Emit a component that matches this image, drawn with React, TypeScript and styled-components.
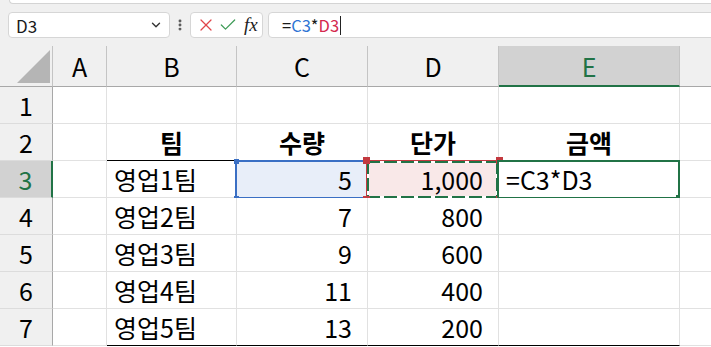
import React from 'react';
import styled, {createGlobalStyle, css} from 'styled-components';
import {ChevronDown, EllipsisVertical, X, Check} from 'lucide-react';

const GlobalStyle = createGlobalStyle`
html,body{
margin:0;
padding:0;
background:#ffffff;
overflow:hidden;
}
*{
box-sizing:border-box;
}
`

const GREEN = '#217346';
const BLUE = '#3a6fc4';
const RED = '#c3393f';
const FONT = `"Noto Sans CJK KR", "Noto Sans", sans-serif`;

type Align = 'left' | 'right' | 'center';
type Mark = 'ref-blue' | 'ref-red' | 'active';
interface CellData {
    text?: string;
    align?: Align;
    bold?: boolean;
    mark?: Mark;
}

// the sixth column is only partly in view, its letter falls outside the window
const columns = ['A', 'B', 'C', 'D', 'E', ''];
const activeColumn = 'E';
const activeRow = 3;

const sheet: CellData[][] = [
    [{}, {}, {}, {}, {}, {}],
    [{}, {text: '팀', align: 'center', bold: true}, {text: '수량', align: 'center', bold: true}, {text: '단가', align: 'center', bold: true}, {text: '금액', align: 'center', bold: true}, {}],
    [{}, {text: '영업1팀'}, {text: '5', align: 'right', mark: 'ref-blue'}, {text: '1,000', align: 'right', mark: 'ref-red'}, {text: '=C3*D3', mark: 'active'}, {}],
    [{}, {text: '영업2팀'}, {text: '7', align: 'right'}, {text: '800', align: 'right'}, {}, {}],
    [{}, {text: '영업3팀'}, {text: '9', align: 'right'}, {text: '600', align: 'right'}, {}, {}],
    [{}, {text: '영업4팀'}, {text: '11', align: 'right'}, {text: '400', align: 'right'}, {}, {}],
    [{}, {text: '영업5팀'}, {text: '13', align: 'right'}, {text: '200', align: 'right'}, {}, {}],
];

// rows whose bottom edge gets the black table rule (columns B..E)
const ruledRows = [2, 7];

const App = () => {
    return (
        <Page>
            <GlobalStyle/>
            <RibbonEdge/>
            <FormulaBar>
                <NameBox>
                    <span>D3</span>
                    <ChevronDown size={14} strokeWidth={2.4} color="#333"/>
                </NameBox>
                <Grip>
                    <EllipsisVertical size={14} strokeWidth={3} color="#555"/>
                </Grip>
                <EditButtons>
                    <X size={20} strokeWidth={1.5} color="#e0464b"/>
                    <Check size={20} strokeWidth={1.5} color="#3e9b57"/>
                    <Fx>fx</Fx>
                </EditButtons>
                <FormulaInput>
                    <span>=</span>
                    <RefText $color="#2e74d4">C3</RefText>
                    <span>*</span>
                    <RefText $color="#d42a4e">D3</RefText>
                    <Caret/>
                </FormulaInput>
            </FormulaBar>
            <Sheet>
                <Corner>
                    <SelectAll/>
                </Corner>
                {columns.map((col, i) => (
                    <ColHeader key={i} $active={col === activeColumn}>{col}</ColHeader>
                ))}
                {sheet.map((row, r) => (
                    <React.Fragment key={r}>
                        <RowHeader $active={r + 1 === activeRow}>{r + 1}</RowHeader>
                        {row.map((cell, c) => (
                            <Cell
                                key={c}
                                $align={cell.align || 'left'}
                                $bold={!!cell.bold}
                                $rule={ruledRows.includes(r + 1) && c >= 1 && c <= 4}
                                $mark={cell.mark}
                            >
                                {cell.text}
                                {cell.mark === 'ref-blue' && (
                                    <RefFrame $color={BLUE}>
                                        <Handle $color={BLUE} $size={5} $pos="tl"/>
                                        <Handle $color={BLUE} $size={5} $pos="tr"/>
                                        <Handle $color={BLUE} $size={5} $pos="bl"/>
                                        <Handle $color={BLUE} $size={5} $pos="br"/>
                                    </RefFrame>
                                )}
                                {cell.mark === 'ref-red' && (
                                    <CopyFrame>
                                        <Handle $color={RED} $size={7} $pos="tl"/>
                                        <Handle $color={RED} $size={7} $pos="tr"/>
                                        <Handle $color={RED} $size={7} $pos="bl"/>
                                        <Handle $color={RED} $size={7} $pos="br"/>
                                    </CopyFrame>
                                )}
                                {cell.mark === 'active' && (
                                    <RefFrame $color={GREEN}>
                                        <Handle $color={GREEN} $size={6} $pos="br"/>
                                    </RefFrame>
                                )}
                            </Cell>
                        ))}
                    </React.Fragment>
                ))}
            </Sheet>
        </Page>
    );
};

const Page = styled.div`
width:711px;
height:347px;
overflow:hidden;
background:#f0f0f0;
display:flex;
flex-direction:column;
font-family:${FONT};
color:#000;
`

const RibbonEdge = styled.div`
height:4px;
margin-left:9px;
background:#ffffff;
border:1px solid #d4d4d4;
border-top:none;
border-right:none;
border-radius:0 0 0 6px;
`

const FormulaBar = styled.div`
height:42px;
display:flex;
align-items:flex-start;
padding:8px 0 0 8px;
`

const boxBase = css`
height:26px;
background:#ffffff;
border:1px solid #d6d6d6;
border-radius:4px;
display:flex;
align-items:center;
`

const NameBox = styled.div`
${boxBase};
width:162px;
padding:0 6px 0 7px;
justify-content:space-between;
font-size:17px;
color:#1a1a1a;
`

const Grip = styled.div`
width:20px;
height:26px;
display:flex;
align-items:center;
justify-content:center;
`

const EditButtons = styled.div`
${boxBase};
width:73px;
padding:0 4px 0 5px;
gap:2px;
`

const Fx = styled.span`
margin-left:4px;
font-family:"Liberation Serif", serif;
font-style:italic;
font-size:19px;
color:#222;
`

const FormulaInput = styled.div`
${boxBase};
flex:1;
margin-left:5px;
margin-right:-10px;
padding-left:13px;
font-size:16.5px;
color:#1a1a1a;
`

const RefText = styled.span<{$color: string}>`
color:${p => p.$color};
`

const Caret = styled.span`
width:1px;
height:19px;
margin-left:1px;
background:#222;
`

const Sheet = styled.div`
flex:1;
display:grid;
grid-template-columns:53px 54px 130px 131px 131px 181px 181px;
grid-template-rows:41px repeat(7, 37px);
background:#ffffff;
font-size:25px;
`

const Corner = styled.div`
background:#f0f0f0;
border-right:1px solid #c4c4c4;
border-bottom:1px solid #a8a8a8;
display:flex;
align-items:flex-end;
justify-content:flex-end;
padding:0 2px 3px 0;
`

const SelectAll = styled.div`
width:0;
height:0;
border-left:33px solid transparent;
border-bottom:33px solid #b5b5b5;
`

const ColHeader = styled.div<{$active: boolean}>`
background:${p => p.$active ? '#d2d2d2' : '#f0f0f0'};
color:${p => p.$active ? GREEN : '#000'};
border-right:1px solid #c4c4c4;
border-bottom:${p => p.$active ? `2px solid ${GREEN}` : '1px solid #a8a8a8'};
display:flex;
align-items:center;
justify-content:center;
line-height:1;
padding-top:${p => p.$active ? '1px' : '0'};
`

const RowHeader = styled.div<{$active: boolean}>`
background:${p => p.$active ? '#d2d2d2' : '#f0f0f0'};
color:${p => p.$active ? GREEN : '#000'};
border-right:${p => p.$active ? `2px solid ${GREEN}` : '1px solid #a8a8a8'};
border-bottom:1px solid #dcdcdc;
display:flex;
align-items:center;
justify-content:center;
line-height:1;
`

const Cell = styled.div<{$align: Align; $bold: boolean; $rule: boolean; $mark?: Mark}>`
position:relative;
display:flex;
align-items:center;
justify-content:${p => p.$align === 'right' ? 'flex-end' : p.$align === 'center' ? 'center' : 'flex-start'};
padding:0 ${p => p.$align === 'right' ? '15px' : '0'} 0 ${p => p.$align === 'left' ? '7px' : '0'};
border-right:1px solid #e1e1e1;
border-bottom:1px solid ${p => p.$rule ? '#000' : '#e1e1e1'};
font-weight:${p => p.$bold ? 700 : 400};
line-height:1;
background:${p => p.$mark === 'ref-blue' ? '#e8eef9' : p.$mark === 'ref-red' ? '#f9e8e8' : '#ffffff'};
`

const RefFrame = styled.div<{$color: string}>`
position:absolute;
inset:-1px -1px -2px -2px;
border:2px solid ${p => p.$color};
pointer-events:none;
`

const dash = 'repeating-linear-gradient(90deg, #217346 0 13px, #ffffff 13px 17px)';
const dashV = 'repeating-linear-gradient(180deg, #217346 0 13px, #ffffff 13px 17px)';

const CopyFrame = styled.div`
position:absolute;
inset:-1px -1px -2px -2px;
border:1px solid ${RED};
pointer-events:none;
background:
    ${dash} top left / 100% 2px no-repeat,
    ${dash} bottom left / 100% 2px no-repeat,
    ${dashV} top left / 2px 100% no-repeat,
    ${dashV} top right / 2px 100% no-repeat;
`

const Handle = styled.span<{$color: string; $size: number; $pos: 'tl' | 'tr' | 'bl' | 'br'}>`
position:absolute;
width:${p => p.$size}px;
height:${p => p.$size}px;
background:${p => p.$color};
${p => p.$pos[0] === 't' ? `top:${-(p.$size / 2) - 1}px;` : `bottom:${-(p.$size / 2) - 1}px;`}
${p => p.$pos[1] === 'l' ? `left:${-(p.$size / 2) - 1}px;` : `right:${-(p.$size / 2) - 1}px;`}
`

export default App;
